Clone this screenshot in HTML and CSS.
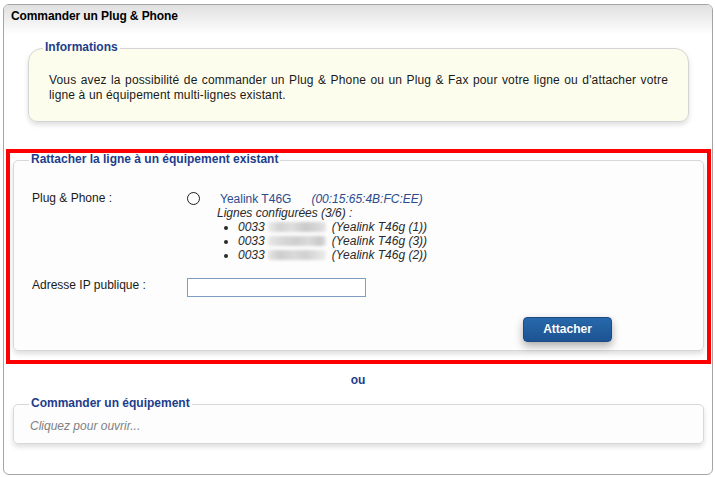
FILE: index.html
```html
<!DOCTYPE html>
<html lang="fr">
<head>
<meta charset="utf-8">
<title>Commander un Plug &amp; Phone</title>
<link rel="stylesheet" href="styles.css">
</head>
<body>
<div class="panel">
  <div class="panel-head">Commander un Plug &amp; Phone</div>

  <fieldset class="box info">
    <legend class="info-legend">Informations</legend>
    <p class="info-text">Vous avez la possibilité de commander un Plug &amp; Phone ou un Plug &amp; Fax pour votre ligne ou d'attacher votre ligne à un équipement multi-lignes existant.</p>
  </fieldset>

  <div class="highlight">
    <fieldset class="box attach">
      <legend>Rattacher la ligne à un équipement existant</legend>
      <div class="form">
        <div class="row device-row">
          <div class="label">Plug &amp; Phone :</div>
          <input type="radio" class="radio" name="device">
          <div class="device">
            <div><a class="dev-name">Yealink T46G</a><span class="mac">(00:15:65:4B:FC:EE)</span></div>
            <div class="lines-title">Lignes configurées (3/6) :</div>
            <ul class="lines">
              <li>0033<span class="blur" aria-hidden="true"></span>(Yealink T46g (1))</li>
              <li>0033<span class="blur b2" aria-hidden="true"></span>(Yealink T46g (3))</li>
              <li>0033<span class="blur b3" aria-hidden="true"></span>(Yealink T46g (2))</li>
            </ul>
          </div>
        </div>
        <div class="row ip-row">
          <label class="label" for="ip">Adresse IP publique :</label>
          <input type="text" id="ip" class="ip-input">
        </div>
        <div class="actions"><button type="button" class="btn">Attacher</button></div>
      </div>
    </fieldset>
  </div>

  <div class="or">ou</div>

  <fieldset class="box order">
    <legend>Commander un équipement</legend>
    <div class="placeholder">Cliquez pour ouvrir...</div>
  </fieldset>
</div>
</body>
</html>
```

FILE: styles.css
```css
* { box-sizing: border-box; }

html, body {
  margin: 0;
  padding: 0;
  background: #fff;
}

body {
  font-family: "Liberation Sans", Arial, sans-serif;
  font-size: 12px;
  line-height: 14px;
  color: #000;
}

.panel {
  margin: 4px 0 0 3px;
  width: 710px;
  height: 471px;
  border: 1px solid #a5a5a5;
  border-radius: 6px;
  background: #fff;
}

.panel-head {
  height: 30px;
  padding: 3px 7px 0;
  line-height: 16px;
  font-weight: bold;
  letter-spacing: -0.1px;
  background: linear-gradient(#e0e0e0, #ffffff);
  border-radius: 5px 5px 0 0;
}

.box {
  margin: 0;
  padding: 0;
  min-width: 0;
  border: 1px solid #d8d8d8;
  border-radius: 5px;
  background: #fdfdfd;
  box-shadow: 0 3px 5px rgba(0, 0, 0, 0.13);
}

.box legend {
  margin-left: 15px;
  padding: 0 2px 2px;
  line-height: 14px;
  font-weight: bold;
  color: #1c3d8b;
}

.info {
  margin: 5px 23px 0 24px;
  background: #fdfdee;
  border-color: #d4d4d4;
  border-radius: 14px 14px 9px 9px;
}

.info .info-legend { margin-left: 14px; }

.info-text {
  margin: 0;
  padding: 17px 20px 18px;
  line-height: 15px;
  letter-spacing: 0.15px;
  text-align: justify;
  color: #1a1a1a;
}

.highlight {
  margin: 27px 1px 0 2px;
  border: 4px solid #ff0000;
}

.attach {
  margin: -1px 3px 9px 3px;
}

.form {
  padding: 23px 18px 8px;
}

.row {
  display: grid;
  grid-template-columns: 155px 30px 1fr;
  align-items: start;
}

.label { color: #1a1a1a; }

.radio {
  appearance: none;
  -webkit-appearance: none;
  margin: 1px 0 0 0;
  width: 13px;
  height: 13px;
  border: 1.5px solid #1e1e1e;
  border-radius: 50%;
  background: #fff;
}

.device {
  padding-top: 1px;
  color: #2a2a2a;
}

.dev-name {
  padding-left: 3px;
  color: #2b4c8e;
  text-decoration: none;
}

.mac {
  margin-left: 20px;
  font-style: italic;
  color: #2b4c8e;
}

.lines-title { font-style: italic; }

.lines {
  margin: 0;
  padding-left: 21px;
  font-style: italic;
}

.blur {
  display: inline-block;
  width: 58px;
  height: 10px;
  margin: 2px 6px 0 3px;
  vertical-align: top;
  border-radius: 3px;
  background: linear-gradient(90deg, #ececec 0%, #d2d2d2 20%, #dedede 40%, #c9c9c9 65%, #d6d6d6 85%, #e4e4e4 100%);
  filter: blur(1.6px);
}

.blur.b2 {
  background: linear-gradient(90deg, #e8e8e8 0%, #d6d6d6 25%, #cfcfcf 50%, #dadada 70%, #c8c8c8 90%, #e2e2e2 100%);
}

.blur.b3 {
  background: linear-gradient(90deg, #e4e4e4 0%, #cdcdcd 20%, #d9d9d9 45%, #d0d0d0 65%, #e0e0e0 85%, #ececec 100%);
}

.ip-row {
  margin-top: 16px;
  grid-template-columns: 155px 1fr;
}

.ip-input {
  margin: 0;
  width: 179px;
  height: 19px;
  padding: 0 3px;
  border: 1px solid #7f9ec2;
  border-radius: 0;
  background: #fff;
  font: inherit;
}

.actions {
  margin-top: 20px;
  padding-left: 491px;
}

.btn {
  display: block;
  width: 89px;
  height: 25px;
  margin: 0;
  padding: 0;
  border: 1px solid #1c4b82;
  border-radius: 4px;
  background: linear-gradient(#2769ab, #1c5393);
  color: #fff;
  font-family: inherit;
  font-size: 12px;
  font-weight: bold;
  line-height: 23px;
  box-shadow: 0 4px 9px rgba(0, 0, 0, 0.32);
  text-shadow: 0 -1px 0 rgba(0, 0, 0, 0.2);
}

.or {
  margin-top: 9px;
  text-align: center;
  font-weight: bold;
  color: #1c3d8b;
}

.order {
  margin: 9px 8px 0 9px;
}

.placeholder {
  padding: 7px 16px 10px;
  font-style: italic;
  color: #808080;
}
```
